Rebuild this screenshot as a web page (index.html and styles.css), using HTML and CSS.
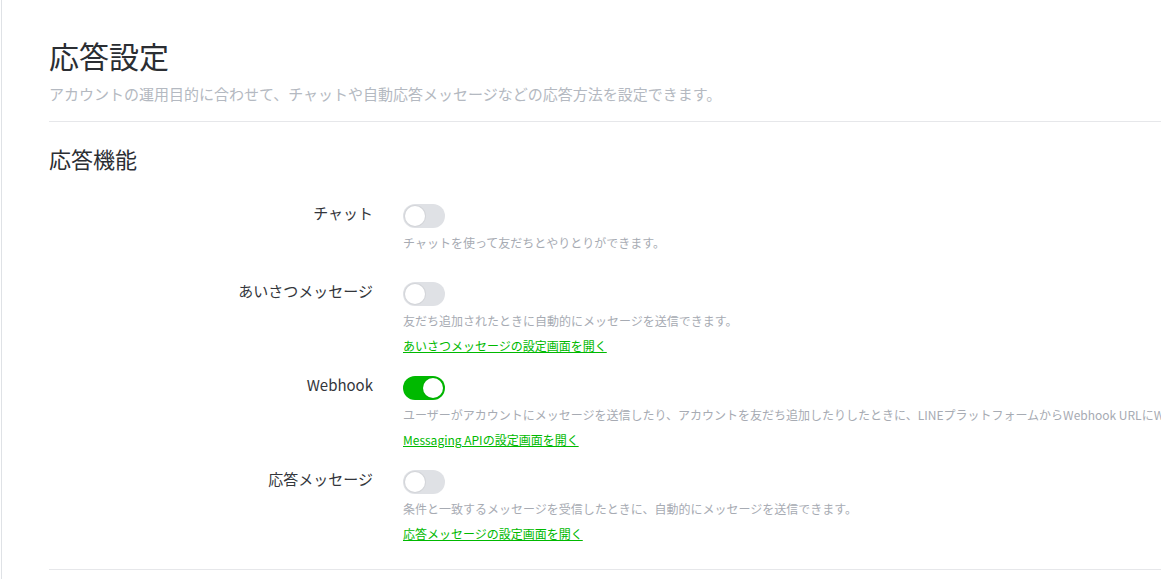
FILE: index.html
```html
<!DOCTYPE html>
<html lang="ja">
<head>
  <meta charset="UTF-8" />
  <meta name="viewport" content="width=device-width, initial-scale=1.0"/>
  <title>応答設定</title>
  <link rel="stylesheet" href="styles.css">
</head>
<body>
  <div class="page">
    <!-- Page header -->
    <h1 class="page-title">応答設定</h1>
    <p class="page-lead">アカウントの運用目的に合わせて、チャットや自動応答メッセージなどの応答方法を設定できます。</p>
    <hr class="divider" />

    <!-- Response features -->
    <h2 class="section-title">応答機能</h2>
    <div class="settings">
      <div class="setting">
        <div class="setting-label">チャット</div>
        <div class="setting-body">
          <span class="switch"><span class="knob"></span></span>
          <p class="setting-desc">チャットを使って友だちとやりとりができます。</p>
        </div>
      </div>

      <div class="setting">
        <div class="setting-label">あいさつメッセージ</div>
        <div class="setting-body">
          <span class="switch"><span class="knob"></span></span>
          <p class="setting-desc">友だち追加されたときに自動的にメッセージを送信できます。</p>
          <a class="setting-link" href="#">あいさつメッセージの設定画面を開く</a>
        </div>
      </div>

      <div class="setting">
        <div class="setting-label">Webhook</div>
        <div class="setting-body">
          <span class="switch is-on"><span class="knob"></span></span>
          <p class="setting-desc">ユーザーがアカウントにメッセージを送信したり、アカウントを友だち追加したりしたときに、LINEプラットフォームからWebhook URLにWebhookイベントが送信されます。</p>
          <a class="setting-link" href="#">Messaging APIの設定画面を開く</a>
        </div>
      </div>

      <div class="setting">
        <div class="setting-label">応答メッセージ</div>
        <div class="setting-body">
          <span class="switch"><span class="knob"></span></span>
          <p class="setting-desc">条件と一致するメッセージを受信したときに、自動的にメッセージを送信できます。</p>
          <a class="setting-link" href="#">応答メッセージの設定画面を開く</a>
        </div>
      </div>
    </div>
    <hr class="divider" />
  </div>
</body>
</html>
```

FILE: styles.css
```css
html, body {
    margin: 0;
    padding: 0;
    background: #fff;
    overflow: hidden;
}

body {
    font-family: "Noto Sans CJK JP", "Noto Sans", sans-serif;
    color: #2f3237;
}

.page {
    margin-left: 1px;
    border-left: 1px solid #dfe2e6;
    padding: 35px 0 0 47px;
    min-height: 600px;
}

/* Header */
.page-title {
    margin: 0;
    font-size: 30px;
    line-height: 40px;
    font-weight: 400;
    color: #2b2e33;
}

.page-lead {
    margin: 8px 0 16px;
    font-size: 15px;
    line-height: 22px;
    color: #b4b9c1;
    white-space: nowrap;
}

.divider {
    margin: 0;
    border: none;
    border-top: 1px solid #e6e7ea;
}

.section-title {
    margin: 21px 0 31px;
    font-size: 22px;
    line-height: 30px;
    font-weight: 400;
    color: #2b2e33;
}

/* Setting rows */
.settings {
    display: flex;
    flex-direction: column;
    gap: 22px;
    padding-bottom: 27px;
}

.setting {
    display: grid;
    grid-template-columns: 324px 1fr;
    column-gap: 30px;
    align-items: start;
}

.setting-label {
    text-align: right;
    font-size: 15px;
    line-height: 18px;
    color: #33363b;
    white-space: nowrap;
}

.setting-body {
    display: flex;
    flex-direction: column;
    align-items: flex-start;
    min-width: 0;
}

.setting-desc {
    margin: 6px 0 8px;
    font-size: 12px;
    line-height: 18px;
    color: #a7abb3;
    white-space: nowrap;
}

.setting-link {
    font-size: 12px;
    line-height: 16px;
    font-weight: 400;
    color: #00b900;
    text-decoration: underline;
    white-space: nowrap;
}

/* Toggle switch */
.switch {
    display: flex;
    align-items: center;
    justify-content: flex-start;
    box-sizing: border-box;
    width: 42px;
    height: 24px;
    padding: 2px;
    border-radius: 12px;
    background: #dfe1e5;
}

.switch .knob {
    width: 20px;
    height: 20px;
    border-radius: 50%;
    background: #fff;
    box-shadow: 0 0 0 1px rgba(0, 0, 0, 0.05);
}

.switch.is-on {
    justify-content: flex-end;
    background: #00b900;
}
```
